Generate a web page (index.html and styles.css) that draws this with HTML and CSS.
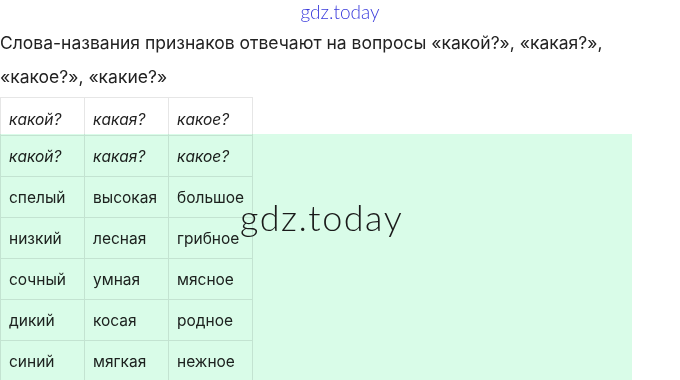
FILE: index.html
```html
<!DOCTYPE html>
<html>
<head>
    <title>Признаки предметов</title>
    <link rel="stylesheet" href="styles.css">
</head>
<body>
    <div class="brand">gdz.today</div>

    <p class="lead">Слова-названия признаков отвечают на вопросы «какой?», «какая?», «какое?», «какие?»</p>

    <div class="answer">
        <table class="words">
            <tr class="head">
                <td><em>какой?</em></td>
                <td><em>какая?</em></td>
                <td><em>какое?</em></td>
            </tr>
            <tr>
                <td><em>какой?</em></td>
                <td><em>какая?</em></td>
                <td><em>какое?</em></td>
            </tr>
            <tr><td>спелый</td><td>высокая</td><td>большое</td></tr>
            <tr><td>низкий</td><td>лесная</td><td>грибное</td></tr>
            <tr><td>сочный</td><td>умная</td><td>мясное</td></tr>
            <tr><td>дикий</td><td>косая</td><td>родное</td></tr>
            <tr><td>синий</td><td>мягкая</td><td>нежное</td></tr>
        </table>
        <div class="shade"></div>
        <div class="mark">gdz.today</div>
    </div>
</body>
</html>
```

FILE: styles.css
```css
body { margin: 0; font-family: Inter, "Noto Sans", sans-serif; color: #222; background: #fff; overflow: hidden; }
.brand { text-align: center; font-family: Lato, sans-serif; font-weight: 300; font-size: 19px; color: #3a3bdc; height: 26px; line-height: 24px; }
.lead { margin: 0; font-size: 17.5px; line-height: 34px; width: 640px; }
.answer { position: relative; margin-top: 3px; }
.words { border-collapse: collapse; font-size: 15.5px; }
.words td { border: 1px solid #e6e6e6; width: 67px; height: 40px; padding: 0 8px; }
.words tr.head td { height: 31px; padding-top: 6px; }
.shade { position: absolute; left: 0; top: 37px; width: 632px; height: 300px; background: #d9fce8; mix-blend-mode: multiply; }
.mark { position: absolute; left: 240px; top: 98px; font-family: Lato, sans-serif; font-weight: 300; font-size: 36px; letter-spacing: 1.5px; color: #1a1a1a; }
```
